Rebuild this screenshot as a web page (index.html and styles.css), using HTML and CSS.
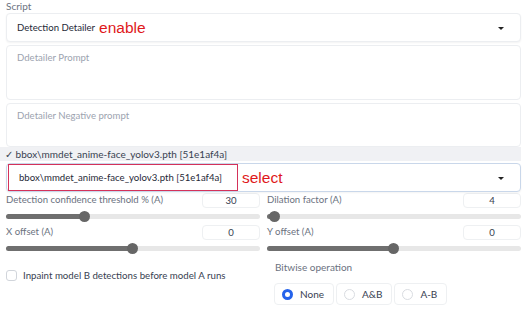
FILE: index.html
```html
<!DOCTYPE html>
<html lang="en">
<head>
    <meta charset="UTF-8">
    <title>Script - Detection Detailer</title>
    <link rel="stylesheet" href="styles.css">
</head>
<body>
    <div class="panel">
        <div class="label">Script</div>
        <div class="dropdown">
            <span class="value">Detection Detailer</span>
            <span class="note">enable</span>
            <span class="caret"></span>
        </div>

        <div class="textbox tall">Ddetailer Prompt</div>
        <div class="textbox">Ddetailer Negative prompt</div>

        <div class="option-bar">✓ bbox\mmdet_anime-face_yolov3.pth [51e1af4a]</div>
        <div class="dropdown active">
            <span class="value boxed">bbox\mmdet_anime-face_yolov3.pth [51e1af4a]</span>
            <span class="note">select</span>
            <span class="caret"></span>
        </div>

        <div class="sliders">
            <div class="slider">
                <div class="slider-head">
                    <span>Detection confidence threshold % (A)</span>
                    <span class="num">30</span>
                </div>
                <div class="track"><div class="fill" style="width: 31%"></div></div>
            </div>
            <div class="slider">
                <div class="slider-head">
                    <span>Dilation factor (A)</span>
                    <span class="num">4</span>
                </div>
                <div class="track"><div class="fill" style="width: 3%"></div></div>
            </div>
            <div class="slider">
                <div class="slider-head">
                    <span>X offset (A)</span>
                    <span class="num">0</span>
                </div>
                <div class="track"><div class="fill" style="width: 50%"></div></div>
            </div>
            <div class="slider">
                <div class="slider-head">
                    <span>Y offset (A)</span>
                    <span class="num">0</span>
                </div>
                <div class="track"><div class="fill" style="width: 50%"></div></div>
            </div>
        </div>

        <div class="bottom">
            <label class="check">
                <span class="box"></span>
                Inpaint model B detections before model A runs
            </label>
            <div class="bitwise">
                <div class="label">Bitwise operation</div>
                <div class="radios">
                    <span class="radio on"><span class="dot"></span>None</span>
                    <span class="radio"><span class="dot"></span>A&amp;B</span>
                    <span class="radio"><span class="dot"></span>A-B</span>
                </div>
            </div>
        </div>
    </div>
</body>
</html>
```

FILE: styles.css
```css
* {
    margin: 0;
    padding: 0;
    box-sizing: border-box;
}

body {
    font-family: Lato, 'Open Sans', Arial, sans-serif;
    font-size: 9.6px;
    color: #374151;
    background-color: #fff;
}

.panel {
    padding: 0 4px 0 6px;
    width: 525px;
}

.label {
    color: #6b7280;
    font-size: 10px;
    line-height: 12px;
    height: 13px;
}

.dropdown {
    position: relative;
    display: flex;
    align-items: center;
    height: 29px;
    border: 1px solid #eceef1;
    border-radius: 4px;
    box-shadow: 0 1px 2px rgba(0,0,0,0.05);
    padding-left: 10px;
    background-color: #fff;
}

.dropdown .value {
    color: #1f2937;
    white-space: nowrap;
}

.note {
    font-family: 'Liberation Sans', Arial, sans-serif;
    color: #e0181b;
    font-size: 15.5px;
    margin-left: 4px;
}

.caret {
    position: absolute;
    right: 16px;
    top: 13px;
    border-left: 3px solid transparent;
    border-right: 3px solid transparent;
    border-top: 3px solid #222;
}

.textbox {
    margin-top: 3px;
    height: 55px;
    border: 1px solid #eceef1;
    border-radius: 4px;
    padding: 6px 10px;
    color: #9ca3af;
}

.textbox + .textbox {
    height: 44px;
}

.option-bar {
    margin: 0 0 2px -6px;
    width: 521px;
    height: 14px;
    line-height: 14px;
    padding-left: 5px;
    background-color: #f0f1f4;
    color: #374151;
    font-size: 10px;
}

.dropdown.active {
    border-color: #c9d7ea;
    padding-left: 1px;
}

.boxed {
    display: flex;
    align-items: center;
    height: 27px;
    width: 230px;
    padding-left: 10px;
    border: 1.5px solid #d4325a;
}

.sliders {
    display: grid;
    grid-template-columns: 254px 254px;
    column-gap: 7px;
    row-gap: 6px;
    margin-top: 1px;
}

.slider-head {
    display: flex;
    justify-content: space-between;
    align-items: flex-start;
    color: #6b7280;
    line-height: 13px;
}

.num {
    width: 58px;
    height: 15px;
    border: 1px solid #eef0f2;
    border-radius: 4px;
    text-align: center;
    color: #374151;
    line-height: 13px;
}

.track {
    margin-top: 6px;
    height: 5px;
    border-radius: 3px;
    background-color: #e7e7e7;
}

.fill {
    position: relative;
    height: 5px;
    border-radius: 3px;
    background-color: #6f6f6f;
}

.fill::after {
    content: "";
    position: absolute;
    right: -5px;
    top: -3px;
    width: 11px;
    height: 11px;
    border-radius: 50%;
    background-color: #666;
}

.bottom {
    display: flex;
    margin-top: 8px;
}

.check {
    display: flex;
    align-items: center;
    gap: 6px;
    width: 268px;
    margin-top: 9px;
    height: 14px;
    color: #374151;
    font-size: 9.7px;
}

.box {
    width: 11px;
    height: 11px;
    border: 1px solid #d1d5db;
    border-radius: 3px;
}

.bitwise .label {
    margin-top: 2px;
    padding-left: 1px;
    height: 22px;
}

.radios {
    display: flex;
    gap: 2px;
}

.radio {
    display: flex;
    align-items: center;
    gap: 7px;
    height: 22px;
    padding: 0 9px 0 7px;
    border: 1px solid #eef0f2;
    border-radius: 4px;
    color: #374151;
    font-size: 10px;
}

.dot {
    width: 11px;
    height: 11px;
    border-radius: 50%;
    border: 1px solid #d9dce1;
}

.radio.on .dot {
    border: 3px solid #2563eb;
    background-color: #fff;
}
```
